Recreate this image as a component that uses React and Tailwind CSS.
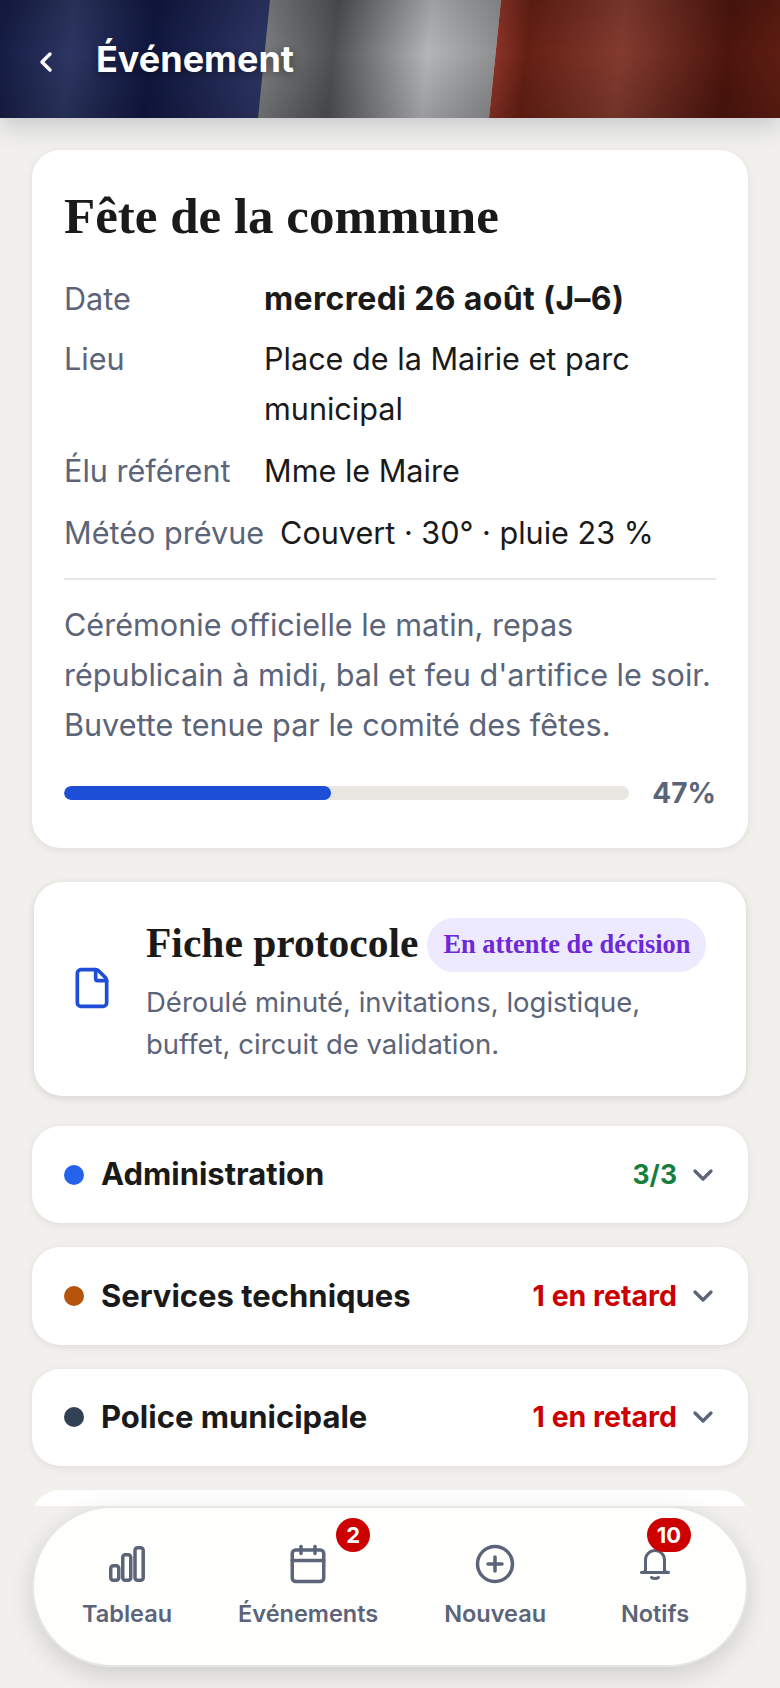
import React from 'react';
import { ChevronLeft, ChevronDown, File, Calendar, CirclePlus } from 'lucide-react';

const serif = "font-['Liberation_Serif',serif]";

function Row({ label, children, bold }) {
  return (
    <div className={`flex gap-4 ${bold ? 'mt-[2px] -mb-[2px]' : ''}`}>
      <span className="min-w-[184px] text-[#5b6478] shrink-0">{label}</span>
      <span className={bold ? 'font-bold text-[32px] tracking-[0.35px]' : ''}>{children}</span>
    </div>
  );
}

function Section({ dot, name, status, statusClass }) {
  return (
    <div className="bg-white rounded-[28px] h-[97.3px] shrink-0 px-8 flex items-center shadow-[0_2px_8px_rgba(0,0,0,0.08)]">
      <span className={`w-5 h-5 rounded-full ${dot}`} />
      <span className="ml-[17px] text-[31px] font-bold text-[#1a1a1a]">{name}</span>
      <span className={`ml-auto font-bold ${statusClass}`}>{status}</span>
      <ChevronDown size={32} strokeWidth={2.5} className="ml-[10px] -mr-[3px] text-[#5b6478]" />
    </div>
  );
}

function NavItem({ icon, label, badge, badgeClass }) {
  return (
    <div className="relative min-w-[86px] flex flex-col items-center text-[#5b6478]">
      <div className="h-[42px] flex items-center justify-center">{icon}</div>
      <span className="mt-[14px] text-[23.5px] font-semibold leading-[30px]">{label}</span>
      {badge && (
        <span className={`absolute h-[34px] rounded-full bg-[#cc0000] text-white text-[22px] font-bold flex items-center justify-center ${badgeClass}`}>{badge}</span>
      )}
    </div>
  );
}

export default function App() {
  return (
    <div className="w-[780px] h-[1688px] overflow-hidden flex flex-col bg-[#f1f0ec] font-['Inter',sans-serif] text-[#1a1a1a]">
      <header className="relative z-10 h-[118px] shrink-0 flex items-center shadow-[0_8px_24px_rgba(30,40,80,0.2)]">
        <svg className="absolute inset-0" width="780" height="118" viewBox="0 0 780 118">
          <defs>
            <linearGradient id="blue" gradientUnits="userSpaceOnUse" x1="0" y1="0" x2="780" y2="79">
              <stop offset="0.008" stopColor="#161d45" />
              <stop offset="0.096" stopColor="#2d3662" />
              <stop offset="0.198" stopColor="#10173f" />
              <stop offset="0.33" stopColor="#2b3362" />
            </linearGradient>
            <linearGradient id="white" gradientUnits="userSpaceOnUse" x1="0" y1="0" x2="780" y2="79">
              <stop offset="0.33" stopColor="#828385" />
              <stop offset="0.43" stopColor="#4f5052" />
              <stop offset="0.55" stopColor="#b4b5b8" />
              <stop offset="0.635" stopColor="#8f9092" />
            </linearGradient>
            <linearGradient id="red" gradientUnits="userSpaceOnUse" x1="0" y1="0" x2="780" y2="79">
              <stop offset="0.635" stopColor="#8c3327" />
              <stop offset="0.675" stopColor="#651f13" />
              <stop offset="0.795" stopColor="#843b2f" />
              <stop offset="0.93" stopColor="#4c150d" />
              <stop offset="1" stopColor="#5e1d12" />
            </linearGradient>
            <linearGradient id="shade" x1="0" x2="0" y1="0" y2="1">
              <stop offset="0" stopColor="#000" stopOpacity="0.12" />
              <stop offset="0.45" stopColor="#000" stopOpacity="0" />
              <stop offset="1" stopColor="#000" stopOpacity="0.14" />
            </linearGradient>
          </defs>
          <rect width="275" height="118" fill="url(#blue)" />
          <polygon points="270,0 501,0 489,118 258,118" fill="url(#white)" />
          <polygon points="501,0 780,0 780,118 489,118" fill="url(#red)" />
          <rect width="780" height="118" fill="url(#shade)" />
        </svg>
        <ChevronLeft size={32} strokeWidth={2.6} className="relative ml-[30px] mt-[6px] text-white" />
        <h1 className="relative ml-[34px] text-[36px] font-bold text-white [text-shadow:0_2px_8px_rgba(0,0,0,0.45)]">Événement</h1>
      </header>

      <main className="flex-1 min-h-0 overflow-hidden flex flex-col px-8 pt-8">
        <section className="shrink-0 bg-white rounded-[28px] px-8 pt-8 pb-[35px] text-[30.6px] leading-[50px] shadow-[0_2px_8px_rgba(0,0,0,0.08)]">
          <h2 className={`${serif} text-[51px] font-bold leading-[68px] mb-[22px]`}>Fête de la commune</h2>
          <div className="flex flex-col gap-3">
            <Row label="Date" bold>mercredi 26 août (J–6)</Row>
            <Row label="Lieu">Place de la Mairie et parc municipal</Row>
            <Row label="Élu référent">Mme le Maire</Row>
            <Row label="Météo prévue">Couvert · 30° · pluie 23 %</Row>
          </div>
          <div className="border-t-2 border-[#e6e6e6] mt-5" />
          <p className="pt-5 -mr-2 text-[#5b6478]">
            Cérémonie officielle le matin, repas républicain à midi, bal et feu d'artifice le soir. Buvette tenue par le comité des fêtes.
          </p>
          <div className="flex items-center h-10 mt-[23px] gap-[23px]">
            <div className="flex-1 h-[14px] rounded-full bg-[#e8e7e2] overflow-hidden">
              <div className="h-full rounded-full bg-[#1d4ed8]" style={{ width: '47.2%' }} />
            </div>
            <span className="text-[28px] font-bold text-[#5b6478]">47%</span>
          </div>
        </section>

        <section className="shrink-0 bg-white rounded-[28px] mt-[34px] mx-[2px] h-[214px] flex items-center pl-[36px] pr-6 shadow-[0_2px_8px_rgba(0,0,0,0.12)]">
          <File size={44} strokeWidth={2} className="-mt-[3px] text-[#1d4ed8] shrink-0" />
          <div className="ml-[32px] mt-[5px]">
            <div className="flex items-center gap-[9px]">
              <span className={`${serif} text-[41.5px] font-bold leading-[54px] -mt-[4px]`}>Fiche protocole</span>
              <span className={`${serif} text-[26.4px] font-bold text-[#6d28d9] bg-[#ede9fe] rounded-full px-4 h-[54px] flex items-center whitespace-nowrap`}>En attente de décision</span>
            </div>
            <p className="mt-[9px] w-[560px] text-[27.5px] leading-[42px] text-[#5b6478]">Déroulé minuté, invitations, logistique, buffet, circuit de validation.</p>
          </div>
        </section>

        <div className="flex flex-col gap-6 mt-[30px]">
          <Section dot="bg-[#2563eb]" name="Administration" status="3/3" statusClass="text-[26.5px] text-[#15803d]" />
          <Section dot="bg-[#b45309]" name="Services techniques" status="1 en retard" statusClass="text-[28.5px] text-[#cc0000]" />
          <Section dot="bg-[#334155]" name="Police municipale" status="1 en retard" statusClass="text-[28.5px] text-[#cc0000]" />
          <div className="bg-white rounded-[28px] h-[98px] shrink-0" />
        </div>
      </main>

      <nav className="relative z-10 shrink-0 mx-8 mb-[21px] h-[161px] rounded-[80px] bg-[#fefefc] border-2 border-[#e6e6e4] shadow-[0_8px_24px_rgba(0,0,0,0.14)] flex justify-between items-start pt-[35px] px-[48px]">
        <NavItem label="Tableau" icon={
          <svg width="36" height="36" viewBox="0 0 36 36" fill="none" stroke="currentColor" strokeWidth="3.5" strokeLinejoin="round">
            <rect x="1.75" y="19.75" width="8" height="14.5" rx="2.5" />
            <rect x="13.75" y="8.75" width="8" height="25.5" rx="2.5" />
            <rect x="26" y="1.75" width="8.2" height="32.5" rx="2.5" />
          </svg>
        } />
        <NavItem label="Événements" badge="2" badgeClass="-top-[25px] right-[8px] w-[34px]" icon={<Calendar size={42} strokeWidth={2} />} />
        <NavItem label="Nouveau" icon={<CirclePlus size={42} strokeWidth={2} />} />
        <NavItem label="Notifs" badge="10" badgeClass="-top-[25px] right-[7px] w-[44px]" icon={
          <svg width="30" height="32" viewBox="0 0 30 32" fill="none" stroke="currentColor" strokeWidth="3" strokeLinecap="round" strokeLinejoin="round">
            <path d="M5.5 23V12a9.5 9.5 0 0 1 19 0v11" />
            <path d="M1.5 24.5c2.5-.2 4-1 4-2.5M28.500 24.500c-2.500-.2-4-1-4-2.500M1.500 24.500h27" />
            <path d="M11.500 29.500c1.800 1.300 5.200 1.300 7 0" />
          </svg>
        } />
      </nav>
    </div>
  );
}
